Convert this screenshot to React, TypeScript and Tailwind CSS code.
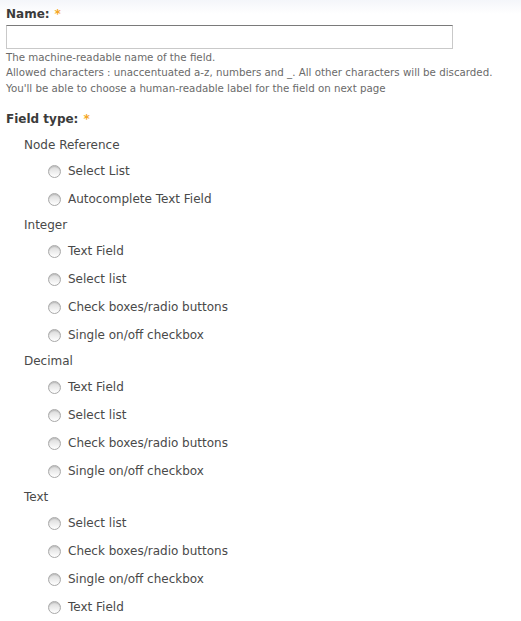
const groups = [
  { label: "Node Reference", options: ["Select List", "Autocomplete Text Field"] },
  {
    label: "Integer",
    options: ["Text Field", "Select list", "Check boxes/radio buttons", "Single on/off checkbox"],
  },
  {
    label: "Decimal",
    options: ["Text Field", "Select list", "Check boxes/radio buttons", "Single on/off checkbox"],
  },
  {
    label: "Text",
    options: ["Select list", "Check boxes/radio buttons", "Single on/off checkbox", "Text Field"],
  },
];

function Radio() {
  return (
    <span className="mr-[7px] inline-block h-[13px] w-[13px] shrink-0 rounded-full border border-[#a9a9a9] bg-gradient-to-b from-[#d9d9d9] to-[#ffffff] shadow-[inset_0_1px_1px_rgba(0,0,0,0.15)]" />
  );
}

export default function App() {
  return (
    <div className="min-h-[621px] w-[521px] bg-gradient-to-b from-[#f4f6fa] to-white to-[14px] px-[6px] pt-[5px] font-['DejaVu_Sans',Verdana,sans-serif] text-[#494949]">
      <div className="flex h-[18px] items-center text-[12px] font-bold text-[#3b3b3b]">
        Name:<span className="ml-[5px] text-[#f5a623]">*</span>
      </div>
      <input
        type="text"
        className="mt-[2px] block h-[24px] w-[447px] border border-[#c9c9c9] border-t-[#7a7a7a] bg-white outline-none"
      />
      <div className="mt-px text-[10.25px] leading-[15.4px] text-[#6a6a6a]">
        <div>The machine-readable name of the field.</div>
        <div>Allowed characters : unaccentuated a-z, numbers and _. All other characters will be discarded.</div>
        <div>You'll be able to choose a human-readable label for the field on next page</div>
      </div>
      <div className="mt-[14px] flex h-[18px] items-center text-[12px] font-bold text-[#3b3b3b]">
        Field type:<span className="ml-[5px] text-[#f5a623]">*</span>
      </div>
      <div className="mt-[5px] text-[12px]">
        {groups.map((g) => (
          <div key={g.label} className="pl-[18px]">
            <div className="flex h-[24px] items-center">{g.label}</div>
            {g.options.map((o) => (
              <label key={o} className="flex h-[28px] items-center pl-[24px]">
                <Radio />
                {o}
              </label>
            ))}
          </div>
        ))}
      </div>
    </div>
  );
}
